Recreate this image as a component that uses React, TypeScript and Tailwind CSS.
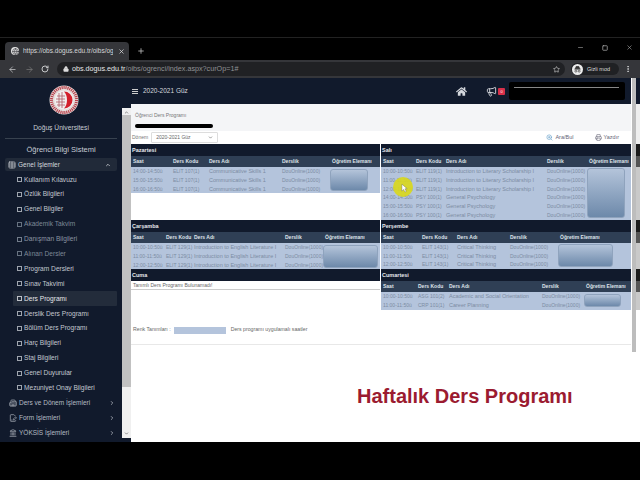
import { ArrowLeft, ArrowRight, Building2, ChevronDown, ChevronRight, ChevronUp, FilePenLine, Globe, Landmark, Lock, Megaphone, Minus, MoreVertical, Plus, Printer, RotateCw, Square, Star, Table, X, ZoomIn } from 'lucide-react';
import { FaHome } from 'react-icons/fa';

const font = "font-['Liberation_Sans',Arial,sans-serif]";

interface Row {
  saat: string;
  kod: string;
  ad: string;
  derslik: string;
}

interface DayProps {
  title: string;
  cols: string;
  rows: Row[];
  photo: string;
}

const menu = [
  ['Kullanım Kılavuzu', 'text-[#c3c8d0]'],
  ['Özlük Bilgileri', 'text-[#c3c8d0]'],
  ['Genel Bilgiler', 'text-[#c3c8d0]'],
  ['Akademik Takvim', 'text-[#7d8896]'],
  ['Danışman Bilgileri', 'text-[#8b95a3]'],
  ['Alınan Dersler', 'text-[#7d8896]'],
  ['Program Dersleri', 'text-[#c3c8d0]'],
  ['Sınav Takvimi', 'text-[#c3c8d0]'],
  ['Ders Programı', 'text-[#e4e6ea] bg-[#232c3b]'],
  ['Derslik Ders Programı', 'text-[#c3c8d0]'],
  ['Bölüm Ders Programı', 'text-[#c3c8d0]'],
  ['Harç Bilgileri', 'text-[#c3c8d0]'],
  ['Staj Bilgileri', 'text-[#c3c8d0]'],
  ['Genel Duyurular', 'text-[#c3c8d0]'],
  ['Mezuniyet Onay Bilgileri', 'text-[#c3c8d0]'],
];

const lower = [
  { name: 'Ders ve Dönem İşlemleri', Icon: Building2 },
  { name: 'Form İşlemleri', Icon: FilePenLine },
  { name: 'YÖKSİS İşlemleri', Icon: Landmark },
];

// the next page copy that peeks out behind the scrollbar
const peek = [
  'h-[26px] bg-[#111a2c]',
  'h-[40px] bg-[#eeeeee]',
  'h-[12px] bg-[#1c1c1c]',
  'h-[11px] bg-[#555555]',
  'h-[53px] bg-[#c9c9c9]',
  'h-[12px] bg-[#1c1c1c]',
  'h-[11px] bg-[#555555]',
  'h-[26px] bg-[#c9c9c9]',
  'h-[12px] bg-[#1c1c1c]',
  'h-[11px] bg-[#555555]',
  'h-[18px] bg-[#c9c9c9]',
];

const make = (saat: string[], kod: string, ad: string): Row[] =>
  saat.map((s) => ({ saat: s, kod, ad, derslik: 'DouOnline(1000)' }));

function Logo() {
  return (
    <svg viewBox="0 0 30 30" className="ml-[49px] mt-[7px] h-[30px] w-[30px]">
      <circle cx="15" cy="15" r="14.5" fill="#e6dfdd" />
      <circle cx="15" cy="15" r="12.5" fill="none" stroke="#b8404c" strokeWidth="3" strokeDasharray="1.2 0.8" />
      <circle cx="15" cy="15" r="9.5" fill="#f1eeee" />
      <path d="M15 6.5a8.5 8.5 0 0 1 0 17c2-2 3-5 3-8.5s-1-6.500-3-8.500z" fill="#d3202c" />
      <path d="M8 11h8M7 14h9M7 17h9M8 20h8M10 8v14M13 7v16" stroke="#b05a66" strokeWidth="0.8" fill="none" />
    </svg>
  );
}

function Incognito() {
  return (
    <svg viewBox="0 0 12 12" className="h-[11px] w-[11px]">
      <circle cx="6" cy="6" r="6" fill="#ececec" />
      <path d="M2.500 5.500h7M3.700 5.300l.8-2.600h3l.8 2.600z" stroke="#333" strokeWidth="0.8" fill="#333" />
      <circle cx="4.200" cy="7.800" r="1.100" fill="none" stroke="#333" strokeWidth="0.7" />
      <circle cx="7.800" cy="7.800" r="1.100" fill="none" stroke="#333" strokeWidth="0.7" />
    </svg>
  );
}

function Day({ title, cols, rows, photo }: DayProps) {
  return (
    <div>
      <div className="h-[12px] bg-[#111a2c] pl-[1px] text-[5.5px] leading-[12px] font-bold text-[#e6e8ec]">{title}</div>
      <div className={`grid h-[11px] items-center bg-[#2f3f55] text-[5px] font-bold text-[#dfe3e9] ${cols}`}>
        <span className="pl-[2px]">Saat</span>
        <span>Ders Kodu</span>
        <span>Ders Adı</span>
        <span>Derslik</span>
        <span>Öğretim Elemanı</span>
      </div>
      <div className={`grid bg-[#b4c4dc] text-[5px] leading-[8.8px] text-[#7c8ca3] ${cols}`}>
        {rows.map((r, i) => (
          <div key={r.saat + r.kod} className="contents">
            <span className="pl-[2px] whitespace-nowrap">{r.saat}</span>
            <span className="whitespace-nowrap">{r.kod}</span>
            <span className="text-[5.5px] whitespace-nowrap">{r.ad}</span>
            <span className="whitespace-nowrap">{r.derslik}</span>
            {i === 0 && (
              <div className="flex items-center" style={{ gridColumn: 5, gridRow: `1 / span ${rows.length}` }}>
                <div className={`-ml-[2px] rounded-[3px] border border-[#8fa3bd] bg-gradient-to-b from-[#b4c4da] to-[#6d89aa] ${photo}`} />
              </div>
            )}
          </div>
        ))}
      </div>
    </div>
  );
}

export default function App() {
  return (
    <div className={`relative flex h-[480px] w-[640px] flex-col overflow-hidden bg-black ${font}`}>
      {/* tab strip */}
      <div className="mt-[37px] flex h-[23px] shrink-0 items-end border-t border-[#222] pl-[5px]">
        <div className="flex h-[18px] w-[124px] items-center gap-[4px] rounded-t-[4px] bg-[#35363a] pl-[6px] text-[6.5px] text-[#d5d6d8]">
          <span className="flex h-[8px] w-[8px] shrink-0 items-center justify-center rounded-full bg-[#e6e6e6]">
            <Globe size={7} className="text-[#35363a]" />
          </span>
          <span className="w-[90px] overflow-hidden whitespace-nowrap">https://obs.dogus.edu.tr/oibs/og</span>
          <X size={7} strokeWidth={2.500} className="ml-[1px] shrink-0 text-[#ddd]" />
        </div>
        <Plus size={8} strokeWidth={2.500} className="mb-[5px] ml-[8px] text-[#bbb]" />
        <div className="mb-[9px] ml-auto flex items-center gap-[18px] pr-[7px] text-[#aaa]">
          <Minus size={7} />
          <Square size={6} strokeWidth={3} />
          <X size={7} />
        </div>
      </div>
      {/* toolbar */}
      <div className="flex h-[18px] shrink-0 items-center bg-[#35363a] pl-[8px] pr-[8px] text-[#c8c9cb]">
        <ArrowLeft size={9} />
        <ArrowRight size={9} className="ml-[8px] text-[#777]" />
        <RotateCw size={8} strokeWidth={3} className="ml-[7px]" />
        <div className="ml-[8px] flex h-[14px] w-[509px] items-center rounded-full bg-[#202124] pl-[6px] text-[7.2px]">
          <Lock size={6} fill="#ddd" className="text-[#ddd]" />
          <span className="ml-[3px] font-medium text-[#e6e6e6]">obs.dogus.edu.tr</span>
          <span className="text-[#8f9194]">/oibs/ogrenci/index.aspx?curOp=1#</span>
          <Star size={7} className="ml-auto mr-[5px] text-[#ddd]" />
        </div>
        <div className="ml-[6px] flex h-[12px] w-[48px] items-center gap-[4px] rounded-full bg-[#202124] pl-[1px] text-[5.5px] text-[#ddd]">
          <Incognito />
          Gizli mod
        </div>
        <MoreVertical size={8} strokeWidth={3} className="ml-[5px]" />
      </div>

      <div className="flex h-[364px] shrink-0">
        {/* sidebar */}
        <aside className="flex w-[122px] shrink-0 flex-col bg-[#111a2c]">
          <Logo />
          <div className="mt-[8px] text-center text-[6.7px] leading-[10px] text-[#c7ccd4]">Doğuş Üniversitesi</div>
          <div className="mx-[5px] mt-[5px] border-t border-[#38424f]" />
          <div className="mt-[6px] text-center text-[7.5px] leading-[10px] text-[#c7ccd4]">Öğrenci Bilgi Sistemi</div>
          <div className="mx-[5px] mt-[3px] flex h-[13px] items-center gap-[2px] rounded-[2px] bg-[#212a39] pl-[3px] pr-[6px] text-[6.5px] text-[#d5d8dd]">
            <Table size={8} />
            Genel İşlemler
            <ChevronUp size={6} strokeWidth={3} className="ml-auto" />
          </div>
          <ul className="mt-[1px] pl-[13px] pr-[5px]">
            {menu.map(([name, cls]) => (
              <li key={name} className={`flex h-[14.9px] items-center gap-[2px] rounded-[1px] pl-[4px] text-[6.6px] whitespace-nowrap ${cls}`}>
                <span className="h-[5px] w-[5px] shrink-0 border-[0.5px] border-current opacity-80" />
                {name}
              </li>
            ))}
          </ul>
          {lower.map(({ name, Icon }) => (
            <div key={name} className="flex h-[15px] items-center gap-[2px] pl-[9px] pr-[7px] text-[6.5px] text-[#b4bac3]">
              <Icon size={8} />
              {name}
              <ChevronRight size={6} strokeWidth={3} className="ml-auto" />
            </div>
          ))}
        </aside>

        <div className="flex w-[509px] shrink-0 flex-col">
          {/* page header */}
          <header className="flex h-[26px] shrink-0 items-center bg-[#111a2c] pl-[10px] pr-[6px] text-[6.5px] text-[#d5d8dd]">
            <div className="flex flex-col gap-[1px]">
              <span className="h-[1px] w-[6px] bg-[#ccc]" />
              <span className="h-[1px] w-[6px] bg-[#ccc]" />
              <span className="h-[1px] w-[6px] bg-[#ccc]" />
            </div>
            <span className="ml-[5px] whitespace-nowrap">2020-2021 Güz</span>
            <FaHome size={11} className="ml-auto" />
            <Megaphone size={11} className="ml-[19px]" />
            <span className="ml-[1px] h-[7px] w-[7px] rounded-[1px] bg-[#d8304a] text-center text-[4px] leading-[7px] text-white">0</span>
            <div className="ml-[4px] h-[18px] w-[116px] rounded-[2px] bg-black pl-[5px] pt-[5px]">
              <div className="h-[1px] w-[105px] bg-[#888]" />
            </div>
          </header>

          <div className="flex min-h-0 flex-1">
            {/* sidebar scrollbar */}
            <div className="w-[9px] shrink-0 bg-[#111a2c] pt-[4px] pb-[4px]">
              <div className="flex h-full flex-col items-center justify-between bg-[#f0f0f0] py-[2px] text-[#555]">
                <ChevronUp size={5} strokeWidth={3} />
                <div className="mb-[44px] w-full flex-1 bg-[#c1c1c1]" />
                <ChevronDown size={5} strokeWidth={3} />
              </div>
            </div>

            <main className="w-[500px] shrink-0 bg-white">
              <div className="h-[241px] border-b border-[#e8e8e8]">
                <div className="h-[27px] bg-[#f4f5f7] pl-[4px] pt-[8px] text-[5px] leading-[6px] text-[#777]">
                  Öğrenci Ders Programı
                  <div className="mt-[6px] h-[4px] w-[78px] rounded-full bg-black" />
                </div>
                <div className="flex h-[13px] items-center pl-[1px] text-[5px] text-[#777]">
                  Dönem
                  <div className="ml-[3px] flex h-[11px] w-[67px] items-center justify-between rounded-[1px] border border-[#ddd] pl-[4px] pr-[4px] text-[#666]">
                    2020-2021 Güz
                    <ChevronDown size={5} strokeWidth={3} />
                  </div>
                  <span className="ml-auto flex items-center gap-[2px] text-[5.500px] text-[#667]">
                    <ZoomIn size={7} className="text-[#5f9bc7]" />
                    Ara/Bul
                  </span>
                  <span className="ml-[21px] mr-[12px] flex items-center gap-[2px] text-[5.500px] text-[#667]">
                    <Printer size={7} />
                    Yazdır
                  </span>
                </div>
                <div className="grid grid-cols-[249px_250px] gap-x-[1px]">
                  <div>
                    <Day
                      title="Pazartesi"
                      cols="grid-cols-[42px_36px_73px_50px_48px]"
                      rows={make(['14:00-14:50ü', '15:00-15:50ü', '16:00-16:50ü'], 'ELIT 107(1)', 'Communicative Skills 1')}
                      photo="h-[22px] w-[38px]"
                    />
                    <div className="h-[26.600px]" />
                    <Day
                      title="Çarşamba"
                      cols="grid-cols-[35px_28px_91px_40px_55px]"
                      rows={make(['10:00-10:50ü', '11:00-11:50ü', '12:00-12:50ü'], 'ELIT 129(1)', 'Introduction to English Literature I')}
                      photo="h-[23px] w-[55px]"
                    />
                    <div className="h-[12px] bg-[#111a2c] pl-[1px] text-[5.5px] leading-[12px] font-bold text-[#e6e8ec]">Cuma</div>
                    <div className="h-[9px] border-b border-[#ccc] pl-[2px] text-[5px] leading-[8px] text-[#666]">Tanımlı Ders Programı Bulunamadı!</div>
                    <div className="mt-[36px] flex items-center pl-[2px] text-[5.2px] text-[#666]">
                      Renk Tanımları :
                      <span className="ml-[3px] h-[7px] w-[52px] bg-[#b4c4dc]" />
                      <span className="ml-[5px]">Ders programı uygulamalı saatler</span>
                    </div>
                  </div>
                  <div>
                    <Day
                      title="Salı"
                      cols="grid-cols-[35px_30px_101px_42px_42px]"
                      rows={[
                        ...make(['10:00-10:50ü', '11:00-11:50ü', '12:00-12:50ü'], 'ELIT 119(1)', 'Introduction to Literary Scholarship I'),
                        ...make(['14:00-14:50ü', '15:00-15:50ü', '16:00-16:50ü'], 'PSY 100(1)', 'General Psychology'),
                      ]}
                      photo="h-[50px] w-[38px]"
                    />
                    <Day
                      title="Perşembe"
                      cols="grid-cols-[41px_35px_53px_50px_71px]"
                      rows={make(['10:00-10:50ü', '11:00-11:50ü', '12:00-12:50ü'], 'ELIT 143(1)', 'Critical Thinking')}
                      photo="h-[23px] w-[55px]"
                    />
                    <Day
                      title="Cumartesi"
                      cols="grid-cols-[37px_31px_93px_44px_45px]"
                      rows={[
                        ...make(['10:00-10:50ü'], 'ASG 101(2)', 'Academic and Social Orientation'),
                        ...make(['11:00-11:50ü'], 'CRP 101(1)', 'Career Planning'),
                      ]}
                      photo="h-[13px] w-[37px]"
                    />
                  </div>
                </div>
              </div>
              <div className="mt-[39px] pl-[226px] text-[20px] leading-[24px] font-bold text-[#9b1b30]">Haftalık Ders Programı</div>
            </main>
          </div>
        </div>

        {/* page scrollbar */}
        <div className="flex w-[5px] shrink-0 flex-col bg-white pl-[1px]">
          <div className="h-[274px] bg-[#bdbdbd]" />
          <div className="flex-1 bg-white" />
        </div>
        <div className="flex flex-1 flex-col bg-white">
          {peek.map((cls, i) => (
            <div key={i} className={cls} />
          ))}
        </div>
      </div>

      {/* yellow cursor highlight from the screen recording */}
      <div className="absolute left-[393px] top-[177px] h-[20px] w-[20px] rounded-full bg-[#d9d81a]/90" />
      <svg viewBox="0 0 8 10" className="absolute left-[401px] top-[184px] h-[9px] w-[7px]">
        <path d="M1 0v8l2-2 1.500 3 1.500-.7-1.500-3H7z" fill="#fff" stroke="#555" strokeWidth="0.4" />
      </svg>
    </div>
  );
}
